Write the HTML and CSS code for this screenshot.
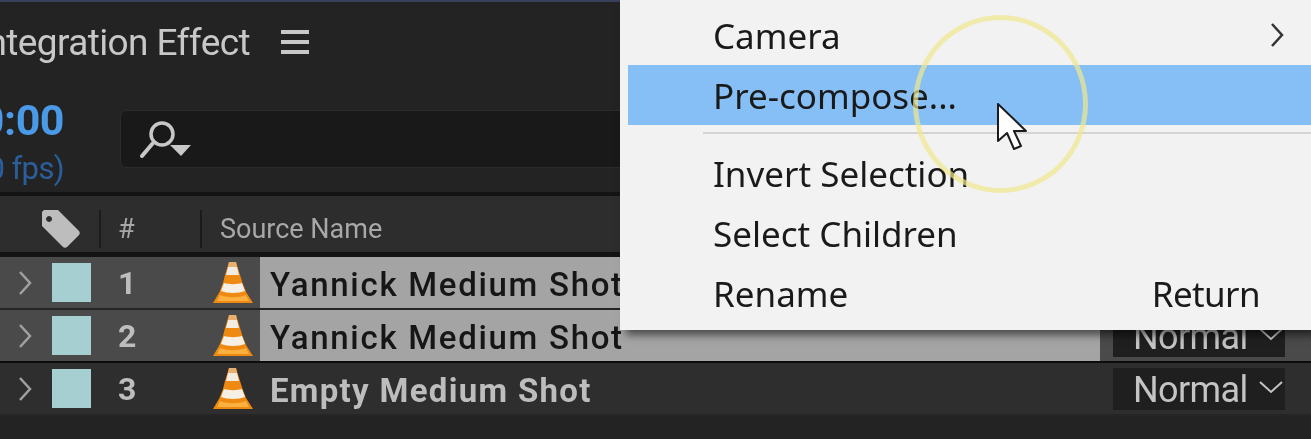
FILE: index.html
```html
<!DOCTYPE html>
<html lang="en">
<head>
    <meta charset="UTF-8">
    <title>Integration Effect</title>
    <link rel="stylesheet" href="styles.css">
</head>
<body>
    <svg class="defs" width="0" height="0">
        <symbol id="cone" viewBox="0 0 40 42">
            <path d="M16 0h7l4 13 2.500 8 3.500 9L40 41H0l6.500-11 3.500-9 2-8z" fill="#ee8a12"/>
            <path d="M15 5h9l2 8H13z" fill="#f3ece2"/>
            <path d="M16 0h7l1 5h-9z" fill="#e8b070"/>
            <path d="M11 21c5 1.500 13 1.500 18 0l3 8c-6 2.500-18 2.500-24 0z" fill="#f6efe4"/>
            <path d="M7 33c8 3 18 3 26 0l3 6H4z" fill="#fbb040"/>
        </symbol>
        <symbol id="chev" viewBox="0 0 14 26">
            <path d="M2 2l10 11L2 24" fill="none" stroke="currentColor" stroke-width="2.500"/>
        </symbol>
    </svg>

    <div class="panel">
        <div class="tab-row">
            <div class="tab-title"><span>Integration Effect</span></div>
            <div class="burger"><i></i><i></i><i></i></div>
        </div>

        <div class="toolbar">
            <div class="time">
                <div class="timecode"><span>0:00:00:00</span></div>
                <div class="fps"><span>00000 (30.00 fps)</span></div>
            </div>
            <div class="search">
                <svg class="search-icon" viewBox="0 0 54 40">
                    <circle cx="23" cy="15" r="11" fill="none" stroke="#c8c8c8" stroke-width="3.500"/>
                    <path d="M14 24L3 37" stroke="#c8c8c8" stroke-width="4" stroke-linecap="round"/>
                    <path d="M31 26h21l-10 11z" fill="#c8c8c8"/>
                </svg>
            </div>
        </div>

        <div class="col-head">
            <div class="col-tag">
                <svg class="tag-icon" viewBox="0 0 42 40">
                    <path d="M5 1h14l21 21c1 1 1 3 0 4L28 38c-1 1-3 1-4 0L3 17V3z M10 7a3 3 0 1 0 .1 0z" fill="#bdbdbd" fill-rule="evenodd"/>
                </svg>
            </div>
            <div class="col-num">#</div>
            <div class="col-name">Source Name</div>
        </div>

        <div class="layer selected">
            <svg class="twirl"><use href="#chev"/></svg>
            <div class="swatch"></div>
            <div class="num">1</div>
            <svg class="cone"><use href="#cone"/></svg>
            <div class="name">Yannick Medium Shot</div>
        </div>
        <div class="layer selected last-selected">
            <svg class="twirl"><use href="#chev"/></svg>
            <div class="swatch"></div>
            <div class="num">2</div>
            <svg class="cone"><use href="#cone"/></svg>
            <div class="name">Yannick Medium Shot</div>
            <div class="mode-cell"><div class="mode">Normal<svg class="mode-chev" viewBox="0 0 26 14"><path d="M2 2l11 10L24 2" fill="none" stroke="currentColor" stroke-width="2"/></svg></div></div>
        </div>
        <div class="layer">
            <svg class="twirl"><use href="#chev"/></svg>
            <div class="swatch"></div>
            <div class="num">3</div>
            <svg class="cone"><use href="#cone"/></svg>
            <div class="name">Empty Medium Shot</div>
            <div class="mode-cell"><div class="mode">Normal<svg class="mode-chev" viewBox="0 0 26 14"><path d="M2 2l11 10L24 2" fill="none" stroke="currentColor" stroke-width="2"/></svg></div></div>
        </div>
    </div>

    <div class="menu">
        <div class="menu-item">Camera<svg class="submenu"><use href="#chev"/></svg></div>
        <div class="menu-item active">Pre-compose...</div>
        <div class="menu-sep"></div>
        <div class="menu-item">Invert Selection</div>
        <div class="menu-item">Select Children</div>
        <div class="menu-item">Rename<span class="shortcut">Return</span></div>
    </div>

    <div class="click-ring"></div>
    <svg class="cursor" viewBox="0 0 32 48">
        <path d="M1 1v37l9-8 7 16 7-3-7-15h12z" fill="#fff" stroke="#1c1c1c" stroke-width="2" stroke-linejoin="round"/>
    </svg>
</body>
</html>
```

FILE: styles.css
```css
html, body {
    margin: 0;
    height: 100%;
    overflow: hidden;
    background: #232323;
}

body {
    position: relative;
    width: 1311px;
    height: 439px;
    font-family: "Roboto", "Liberation Sans", sans-serif;
    filter: blur(0.6px);
}

.defs {
    display: block;
    height: 0;
}

.panel {
    display: flex;
    flex-direction: column;
    height: 437px;
    background: #232323;
    border-top: 2px solid #39415a;
}

.tab-row {
    display: flex;
    align-items: center;
    height: 80px;
}

.tab-title {
    display: flex;
    justify-content: flex-end;
    width: 250px;
    flex: none;
    overflow: hidden;
    font-size: 37px;
    color: #c8c8c8;
    letter-spacing: -0.6px;
    white-space: nowrap;
}

.burger {
    display: flex;
    flex-direction: column;
    gap: 6px;
    margin-left: 31px;
}

.burger i {
    display: block;
    width: 28px;
    height: 4px;
    background: #c8c8c8;
}

.toolbar {
    display: flex;
    height: 110px;
    border-bottom: 4px solid #141414;
}

.time {
    width: 64px;
    flex: none;
    overflow: hidden;
    padding-top: 12px;
}

.timecode, .fps {
    display: flex;
    justify-content: flex-end;
    white-space: nowrap;
}

.timecode {
    font-size: 43px;
    line-height: 52px;
    font-weight: 700;
    color: #4a9ae8;
    letter-spacing: -0.5px;
}

.fps {
    margin-top: 5px;
    font-size: 31px;
    line-height: 36px;
    color: #2a5f9c;
    letter-spacing: -0.6px;
}

.search {
    display: flex;
    align-items: center;
    margin: 28px 0 0 56px;
    width: 600px;
    height: 58px;
    padding-left: 18px;
    box-sizing: border-box;
    background: #191919;
    border: 1px solid #2b2b2b;
    border-radius: 7px;
}

.search-icon {
    width: 54px;
    height: 40px;
}

.col-head {
    display: flex;
    align-items: center;
    height: 56px;
    font-size: 27px;
    color: #a8a8a8;
    background: #2d2d2d;
    border-bottom: 5px solid #141414;
}

.col-tag {
    display: flex;
    align-items: center;
    justify-content: flex-end;
    width: 101px;
    height: 38px;
    margin-top: 10px;
    box-sizing: border-box;
    padding-right: 18px;
    border-right: 2px solid #1b1b1b;
}

.tag-icon {
    width: 42px;
    height: 40px;
}

.col-num {
    display: flex;
    align-items: center;
    width: 101px;
    height: 38px;
    margin-top: 10px;
    box-sizing: border-box;
    padding-left: 17px;
    border-right: 2px solid #1b1b1b;
}

.col-name {
    margin-top: 10px;
    padding-left: 18px;
}

.layer {
    display: flex;
    align-items: center;
    height: 51px;
    background: #2e2e2e;
    color: #bdbdbd;
    border-bottom: 2px solid #252525;
}

.layer.selected {
    background: #4a4a4a;
}

.twirl {
    width: 14px;
    height: 26px;
    margin-left: 18px;
    flex: none;
    color: #a0a0a0;
}

.swatch {
    width: 39px;
    height: 39px;
    margin-left: 20px;
    flex: none;
    background: #a5cfd0;
}

.num {
    width: 75px;
    margin-left: 27px;
    flex: none;
    font-size: 32px;
    font-weight: 700;
}

.cone {
    width: 40px;
    height: 42px;
    flex: none;
    margin-left: 20px;
}

.name {
    display: flex;
    align-items: center;
    align-self: stretch;
    width: 830px;
    margin-left: 7px;
    padding: 3px 0 0 10px;
    box-sizing: content-box;
    height: 48px;
    flex: none;
    font-size: 33px;
    font-weight: 700;
    letter-spacing: 1.3px;
    white-space: nowrap;
}

.selected .name {
    background: #a4a4a4;
    color: #161616;
    font-weight: 500;
    letter-spacing: 1.7px;
}

.last-selected {
    border-bottom-color: #0c0c0c;
}

.mode-cell {
    display: flex;
    align-items: center;
    align-self: stretch;
    flex: none;
    padding-left: 13px;
}

.mode {
    display: flex;
    align-items: center;
    width: 172px;
    height: 42px;
    box-sizing: border-box;
    padding: 3px 0 0 20px;
    background: #1f1f1f;
    font-size: 36px;
    letter-spacing: -0.6px;
    color: #c4c4c4;
}

.mode-chev {
    width: 26px;
    height: 14px;
    margin: 0 0 6px 10px;
}

/* context menu on top of the timeline */
.menu {
    position: absolute;
    left: 620px;
    top: 0;
    width: 691px;
    height: 330px;
    box-sizing: border-box;
    padding: 5px 0 0 8px;
    background: #f2f2f2;
    box-shadow: 6px 5px 8px rgba(0, 0, 0, 0.55);
    font-family: "Noto Sans", "Liberation Sans", sans-serif;
    font-size: 35px;
    color: #1a1a1a;
}

.menu-item {
    display: flex;
    align-items: center;
    justify-content: space-between;
    height: 60px;
    padding: 0 27px 0 85px;
}

.menu-item.active {
    background: #86bff5;
}

.menu-sep {
    height: 2px;
    margin: 7px 0 9px 75px;
    background: #d4d4d4;
}

.submenu {
    width: 14px;
    height: 26px;
    color: #333;
}

.shortcut {
    margin-right: 24px;
    letter-spacing: -0.6px;
}

.click-ring {
    position: absolute;
    left: 913px;
    top: 15px;
    width: 175px;
    height: 178px;
    box-sizing: border-box;
    border: 5px solid rgba(240, 232, 140, 0.7);
    border-radius: 50%;
}

.cursor {
    position: absolute;
    left: 997px;
    top: 103px;
    width: 32px;
    height: 48px;
}
```
